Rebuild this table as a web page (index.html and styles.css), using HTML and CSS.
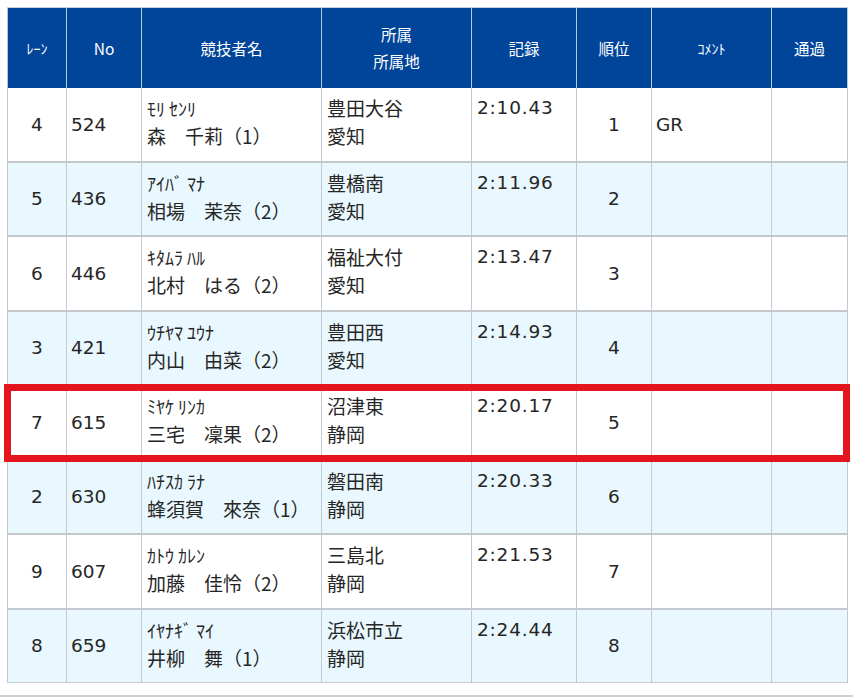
FILE: index.html
```html
<!DOCTYPE html>
<html lang="ja">
<head>
<meta charset="utf-8">
<title>結果</title>
<link rel="stylesheet" href="styles.css">
</head>
<body>
<div class="wrap">
  <table class="result">
    <colgroup>
      <col class="c-lane"><col class="c-no"><col class="c-name"><col class="c-aff">
      <col class="c-rec"><col class="c-rank"><col class="c-com"><col class="c-pass">
    </colgroup>
    <thead>
      <tr>
        <th><span class="small">ﾚｰﾝ</span></th>
        <th>No</th>
        <th>競技者名</th>
        <th>所属<br>所属地</th>
        <th>記録</th>
        <th>順位</th>
        <th><span class="small">ｺﾒﾝﾄ</span></th>
        <th>通過</th>
      </tr>
    </thead>
    <tbody>
      <tr>
        <td class="lane">4</td><td class="no">524</td>
        <td class="name"><span class="kana">ﾓﾘ ｾﾝﾘ</span><br>森　千莉（1）</td>
        <td class="aff">豊田大谷<br>愛知</td>
        <td class="rec">2:10.43</td><td class="rank">1</td><td class="com">GR</td><td class="pass"></td>
      </tr>
      <tr class="alt">
        <td class="lane">5</td><td class="no">436</td>
        <td class="name"><span class="kana">ｱｲﾊﾞ ﾏﾅ</span><br>相場　茉奈（2）</td>
        <td class="aff">豊橋南<br>愛知</td>
        <td class="rec">2:11.96</td><td class="rank">2</td><td class="com"></td><td class="pass"></td>
      </tr>
      <tr>
        <td class="lane">6</td><td class="no">446</td>
        <td class="name"><span class="kana">ｷﾀﾑﾗ ﾊﾙ</span><br>北村　はる（2）</td>
        <td class="aff">福祉大付<br>愛知</td>
        <td class="rec">2:13.47</td><td class="rank">3</td><td class="com"></td><td class="pass"></td>
      </tr>
      <tr class="alt">
        <td class="lane">3</td><td class="no">421</td>
        <td class="name"><span class="kana">ｳﾁﾔﾏ ﾕｳﾅ</span><br>内山　由菜（2）</td>
        <td class="aff">豊田西<br>愛知</td>
        <td class="rec">2:14.93</td><td class="rank">4</td><td class="com"></td><td class="pass"></td>
      </tr>
      <tr>
        <td class="lane">7</td><td class="no">615</td>
        <td class="name"><span class="kana">ﾐﾔｹ ﾘﾝｶ</span><br>三宅　凜果（2）</td>
        <td class="aff">沼津東<br>静岡</td>
        <td class="rec">2:20.17</td><td class="rank">5</td><td class="com"></td><td class="pass"></td>
      </tr>
      <tr class="alt">
        <td class="lane">2</td><td class="no">630</td>
        <td class="name"><span class="kana">ﾊﾁｽｶ ﾗﾅ</span><br>蜂須賀　來奈（1）</td>
        <td class="aff">磐田南<br>静岡</td>
        <td class="rec">2:20.33</td><td class="rank">6</td><td class="com"></td><td class="pass"></td>
      </tr>
      <tr>
        <td class="lane">9</td><td class="no">607</td>
        <td class="name"><span class="kana">ｶﾄｳ ｶﾚﾝ</span><br>加藤　佳怜（2）</td>
        <td class="aff">三島北<br>静岡</td>
        <td class="rec">2:21.53</td><td class="rank">7</td><td class="com"></td><td class="pass"></td>
      </tr>
      <tr class="alt">
        <td class="lane">8</td><td class="no">659</td>
        <td class="name"><span class="kana">ｲﾔﾅｷﾞ ﾏｲ</span><br>井柳　舞（1）</td>
        <td class="aff">浜松市立<br>静岡</td>
        <td class="rec">2:24.44</td><td class="rank">8</td><td class="com"></td><td class="pass"></td>
      </tr>
    </tbody>
  </table>
  <div class="highlight"></div>
  <div class="rule"></div>
</div>
</body>
</html>
```

FILE: styles.css
```css
html, body {
  margin: 0;
  padding: 0;
  background: #ffffff;
}

body {
  font-family: "DejaVu Sans", "Noto Sans CJK JP", sans-serif;
  color: #262626;
}

.wrap {
  position: relative;
  padding: 7px 6px 0 7px;
}

.result {
  width: 840px;
  table-layout: fixed;
  border-collapse: collapse;
  border: 1px solid #c4cad0;
}

.c-lane { width: 59px; }
.c-no { width: 75px; }
.c-name { width: 180px; }
.c-aff { width: 150px; }
.c-rec { width: 105px; }
.c-rank { width: 75px; }
.c-com { width: 120px; }
.c-pass { width: 76px; }

.result th {
  height: 80px;
  padding: 0;
  background: #00459a;
  color: #ffffff;
  font-family: "Noto Sans CJK JP", sans-serif;
  font-weight: normal;
  font-size: 15.5px;
  line-height: 27px;
  text-align: center;
  vertical-align: middle;
  border-left: 1px solid #b9c6d8;
  border-right: 1px solid #b9c6d8;
  border-top: 1px solid #c9d3e0;
}

.result th .small {
  font-size: 14px;
}

.result td {
  height: 67px;
  padding: 6px 5px 0 5px;
  font-size: 19px;
  line-height: 28px;
  vertical-align: top;
  border-left: 1px solid #c4cad0;
  border-right: 1px solid #c4cad0;
  border-bottom: 2px solid #c3c8cd;
  background: #ffffff;
}

.result tr:last-child td {
  border-bottom: 1px solid #c4cad0;
}

.result tr.alt td {
  height: 66px;
  background: #e9f8fe;
}

.result td.lane,
.result td.rank {
  text-align: center;
  vertical-align: middle;
  padding: 0;
  font-size: 18.5px;
}

.result td.no,
.result td.com {
  vertical-align: middle;
  padding: 0 4px;
  font-size: 18.5px;
}

.result td.rec {
  font-size: 18.5px;
  letter-spacing: 0.8px;
}

.result td.name,
.result td.aff {
  font-family: "Noto Sans CJK JP", sans-serif;
}

.result td.name .kana {
  font-size: 18px;
}

.highlight {
  position: absolute;
  left: 4px;
  top: 384px;
  width: 846px;
  height: 78px;
  box-sizing: border-box;
  border: 7px solid #e3161f;
  pointer-events: none;
}

.rule {
  margin-top: 12px;
  margin-left: -7px;
  margin-right: -6px;
  border-top: 2px solid #d0d0d0;
}
```
